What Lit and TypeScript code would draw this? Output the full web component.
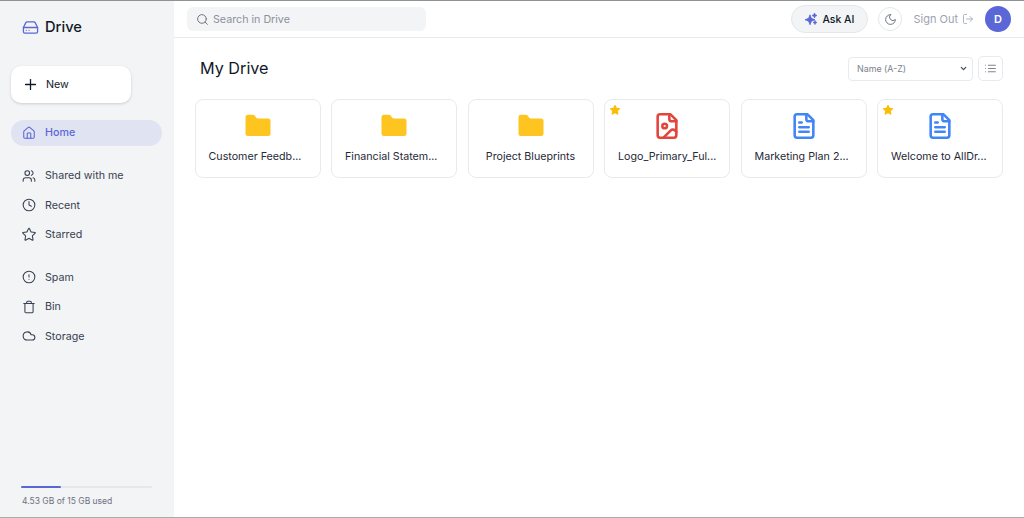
import { LitElement, html, css, svg } from 'lit';
import { customElement } from 'lit/decorators.js';
import { classMap } from 'lit/directives/class-map.js';

const stroke = (body: unknown, size = 14, sw = 2) => html`
  <svg width=${size} height=${size} viewBox="0 0 24 24" fill="none" stroke="currentColor"
    stroke-width=${sw} stroke-linecap="round" stroke-linejoin="round">${body}</svg>`;

const icons = {
  drive: svg`<path d="M22 12H2"/><path d="M5.45 5.11 2 12v6a2 2 0 0 0 2 2h16a2 2 0 0 0 2-2v-6l-3.45-6.89A2 2 0 0 0 16.76 4H7.24a2 2 0 0 0-1.79 1.11z"/><path d="M6 16h.01"/><path d="M10 16h.01"/>`,
  plus: svg`<path d="M5 12h14"/><path d="M12 5v14"/>`,
  home: svg`<path d="M15 21v-8a1 1 0 0 0-1-1h-4a1 1 0 0 0-1 1v8"/><path d="M3 10a2 2 0 0 1 .71-1.53l7-6a2 2 0 0 1 2.58 0l7 6A2 2 0 0 1 21 10v9a2 2 0 0 1-2 2H5a2 2 0 0 1-2-2z"/>`,
  users: svg`<path d="M16 21v-2a4 4 0 0 0-4-4H6a4 4 0 0 0-4 4v2"/><circle cx="9" cy="7" r="4"/><path d="M22 21v-2a4 4 0 0 0-3-3.87"/><path d="M16 3.13a4 4 0 0 1 0 7.75"/>`,
  clock: svg`<circle cx="12" cy="12" r="10"/><polyline points="12 6 12 12 16 14"/>`,
  star: svg`<path d="M11.5 2.3a.55.55 0 0 1 1 0l2.8 5.7a1 1 0 0 0 .75.55l6.3.92a.55.55 0 0 1 .3.94l-4.55 4.44a1 1 0 0 0-.29.88l1.08 6.27a.55.55 0 0 1-.8.58l-5.63-2.96a1 1 0 0 0-.93 0l-5.63 2.96a.55.55 0 0 1-.8-.58l1.07-6.27a1 1 0 0 0-.29-.88L1.35 10.4a.55.55 0 0 1 .3-.94l6.3-.92A1 1 0 0 0 8.7 8z"/>`,
  alert: svg`<circle cx="12" cy="12" r="10"/><line x1="12" y1="8" x2="12" y2="12"/><line x1="12" y1="16" x2="12.01" y2="16"/>`,
  bin: svg`<path d="M3 6h18"/><path d="M19 6v14a2 2 0 0 1-2 2H7a2 2 0 0 1-2-2V6"/><path d="M8 6V4a2 2 0 0 1 2-2h4a2 2 0 0 1 2 2v2"/>`,
  cloud: svg`<path d="M17.5 19H9a7 7 0 1 1 6.71-9h1.79a4.5 4.5 0 1 1 0 9Z"/>`,
  search: svg`<circle cx="11" cy="11" r="8"/><path d="m21 21-4.3-4.3"/>`,
  moon: svg`<path d="M12 3a6 6 0 0 0 9 9 9 9 0 1 1-9-9Z"/>`,
  signout: svg`<path d="M9 21H5a2 2 0 0 1-2-2V5a2 2 0 0 1 2-2h4"/><polyline points="16 17 21 12 16 7"/><line x1="21" y1="12" x2="9" y2="12"/>`,
  list: svg`<line x1="8" y1="6" x2="21" y2="6"/><line x1="8" y1="12" x2="21" y2="12"/><line x1="8" y1="18" x2="21" y2="18"/><line x1="3" y1="6" x2="3.01" y2="6"/><line x1="3" y1="12" x2="3.01" y2="12"/><line x1="3" y1="18" x2="3.01" y2="18"/>`,
  doc: svg`<path d="M15 2H6a2 2 0 0 0-2 2v16a2 2 0 0 0 2 2h12a2 2 0 0 0 2-2V7Z"/><path d="M14 2v4a2 2 0 0 0 2 2h4"/><path d="M10 9H8"/><path d="M16 13H8"/><path d="M16 17H8"/>`,
  image: svg`<path d="M15 2H6a2 2 0 0 0-2 2v16a2 2 0 0 0 2 2h12a2 2 0 0 0 2-2V7Z"/><path d="M14 2v4a2 2 0 0 0 2 2h4"/><circle cx="10" cy="12" r="2"/><path d="m20 17-1.3-1.3a2.4 2.4 0 0 0-3.4 0L9 22"/>`,
};

const folder = html`<svg width="30" height="30" viewBox="0 0 24 24" fill="#fec41f">
  <path d="M4 20a2 2 0 0 1-2-2V5a2 2 0 0 1 2-2h3.9a2 2 0 0 1 1.69.9l.81 1.2a2 2 0 0 0 1.67.9H20a2 2 0 0 1 2 2v10a2 2 0 0 1-2 2Z"/>
</svg>`;

const solidStar = html`<svg width="12" height="12" viewBox="0 0 24 24" fill="#fbbc04" stroke="#fbbc04" stroke-width="2" stroke-linejoin="round">
  <path d="M12 2.5l2.95 6 6.55.95-4.75 4.62 1.12 6.53L12 17.5l-5.87 3.1 1.12-6.53L2.5 9.45l6.55-.95z"/>
</svg>`;

type FileItem = { name: string; kind: 'folder' | 'doc' | 'image'; starred?: boolean };

// names are already shortened the way the app shows them
const files: FileItem[] = [
  { name: 'Customer Feedb...', kind: 'folder' },
  { name: 'Financial Statem...', kind: 'folder' },
  { name: 'Project Blueprints', kind: 'folder' },
  { name: 'Logo_Primary_Ful...', kind: 'image', starred: true },
  { name: 'Marketing Plan 2...', kind: 'doc' },
  { name: 'Welcome to AllDr...', kind: 'doc', starred: true },
];

@customElement('app-root')
export class AppRoot extends LitElement {
  static styles = css`
    :host {
      display: block;
      height: 518px;
      overflow: hidden;
      font-family: Inter, 'Noto Sans', sans-serif;
      color: #1f2937;
      background: #fff;
    }
    svg { display: block; flex: none; }

    .app {
      display: flex;
      height: 518px;
      box-sizing: border-box;
      border-top: 1px solid #8e9491;
      border-bottom: 1px solid #a9abab;
    }

    .sidebar {
      width: 174px;
      flex: none;
      box-sizing: border-box;
      background: #f3f4f6;
      padding: 0 12px 0 11px;
      display: flex;
      flex-direction: column;
    }
    .brand {
      display: flex;
      align-items: center;
      gap: 6px;
      height: 52px;
      padding: 0 0 0 11px;
      font-size: 14.7px;
      font-weight: 500;
      color: #111827;
    }
    .brand svg { color: #5b67d6; }
    .new {
      display: flex;
      align-items: center;
      gap: 7.5px;
      width: 120px;
      height: 37px;
      margin-top: 13px;
      padding-left: 10.5px;
      box-sizing: border-box;
      background: #fff;
      border-radius: 10px;
      box-shadow: 0 1px 3px rgba(0, 0, 0, .16);
      font-size: 10.7px;
      color: #111827;
    }
    nav { display: flex; flex-direction: column; }
    .item {
      display: flex;
      align-items: center;
      gap: 9.5px;
      height: 26px;
      padding-left: 10.5px;
      margin-bottom: 3.4px;
      border-radius: 13px;
      font-size: 10.7px;
      color: #374151;
    }
    .item.active {
      background: #e0e3f2;
      color: #5b67d6;
      font-weight: 500;
    }
    .main-nav { margin-top: 16.5px; }
    .group { margin-top: 13.8px; }
    .group + .group { margin-top: 13.4px; }
    .storage { margin-top: auto; padding: 0 10px 10px 10px; }
    .track { height: 2.5px; background: #e5e7eb; border-radius: 2px; }
    .fill { height: 100%; background: #5b67d6; border-radius: 2px; }
    .storage p { margin: 7px 0 0 1px; font-size: 8.5px; color: #6b7280; line-height: 12px; }

    .content { flex: 1; min-width: 0; display: flex; flex-direction: column; }
    header {
      height: 37px;
      flex: none;
      box-sizing: border-box;
      border-bottom: 1px solid #e8eaed;
      display: flex;
      align-items: center;
      padding: 0 13px;
    }
    .search {
      display: flex;
      align-items: center;
      gap: 4px;
      width: 239px;
      height: 24px;
      padding-left: 9px;
      box-sizing: border-box;
      background: #f3f4f6;
      border-radius: 6px;
      font-size: 10.7px;
      color: #8b919c;
    }
    .search svg { color: #6b7280; }
    .actions { margin-left: auto; display: flex; align-items: center; }
    .ask {
      display: flex;
      align-items: center;
      gap: 5px;
      width: 77px;
      height: 28px;
      box-sizing: border-box;
      justify-content: center;
      background: #f3f4f6;
      border: 1px solid #e5e7eb;
      border-radius: 14px;
      font-size: 10.5px;
      font-weight: 500;
      color: #111827;
    }
    .ask svg { color: #5b67d6; }
    .theme {
      display: grid;
      place-items: center;
      width: 24px;
      height: 24px;
      margin-left: 10px;
      box-sizing: border-box;
      border: 1px solid #e5e7eb;
      border-radius: 50%;
      color: #6b7280;
    }
    .signout {
      display: flex;
      align-items: center;
      gap: 4px;
      margin-left: 11px;
      font-size: 11px;
      color: #9ca3af;
    }
    .avatar {
      display: grid;
      place-items: center;
      width: 26px;
      height: 26px;
      margin-left: 11px;
      border-radius: 50%;
      background: #5b67d6;
      color: #fff;
      font-size: 11px;
      font-weight: 600;
    }

    main { padding: 0 21px 0 20.5px; }
    .toolbar {
      display: flex;
      align-items: center;
      height: 61px;
      padding-left: 5.5px;
    }
    h1 { margin: 0 0 1px; font-size: 16.2px; font-weight: 400; color: #111827; }
    .sort {
      margin-left: auto;
      display: flex;
      align-items: center;
      gap: 5px;
    }
    .select {
      display: flex;
      align-items: center;
      justify-content: space-between;
      width: 125px;
      height: 24px;
      padding: 0 4px 0 8px;
      box-sizing: border-box;
      background: #fff;
      border: 1px solid #e8eaed;
      border-radius: 4px;
      font-size: 8.9px;
      color: #7b818c;
    }
    .select svg { color: #374151; }
    .view {
      display: grid;
      place-items: center;
      width: 25px;
      height: 25px;
      box-sizing: border-box;
      border: 1px solid #e8eaed;
      border-radius: 5px;
      color: #6b7280;
    }

    .grid {
      display: grid;
      grid-template-columns: repeat(6, 1fr);
      gap: 10.5px;
    }
    .card {
      position: relative;
      height: 79px;
      box-sizing: border-box;
      border: 1px solid #e8eaed;
      border-radius: 8px;
      background: #fff;
      display: flex;
      flex-direction: column;
      align-items: center;
      padding-top: 11px;
      min-width: 0;
    }
    .card .ic { height: 30px; display: grid; place-items: center; }
    .name {
      margin-top: 9px;
      width: 100px;
      font-size: 10.7px;
      line-height: 14px;
      color: #1f2937;
      white-space: nowrap;
      text-align: center;
    }
    .name.cut { text-align: left; padding-left: 1px; box-sizing: border-box; }
    .star { position: absolute; top: 4px; left: 4px; }
    .doc { color: #4285f4; }
    .img { color: #e2453c; }
  `;

  private _item(icon: unknown, label: string, active = false) {
    return html`<div class="item ${active ? 'active' : ''}">${stroke(icon, 14, 1.8)}<span>${label}</span></div>`;
  }

  private _card(f: FileItem) {
    let icon;
    if (f.kind === 'folder') icon = folder;
    else icon = html`<span class=${f.kind === 'doc' ? 'doc' : 'img'}>${stroke(f.kind === 'doc' ? icons.doc : icons.image, 28, 2.2)}</span>`;
    return html`<div class="card">
      ${f.starred ? html`<span class="star">${solidStar}</span>` : ''}
      <div class="ic">${icon}</div>
      <div class=${classMap({ name: true, cut: f.name.endsWith('...') })}>${f.name}</div>
    </div>`;
  }

  render() {
    return html`
      <div class="app">
        <aside class="sidebar">
          <div class="brand">${stroke(icons.drive, 17, 1.8)}<span>Drive</span></div>
          <div class="new">${stroke(icons.plus, 17, 1.8)}<span>New</span></div>
          <nav class="main-nav">${this._item(icons.home, 'Home', true)}</nav>
          <nav class="group">
            ${this._item(icons.users, 'Shared with me')}
            ${this._item(icons.clock, 'Recent')}
            ${this._item(icons.star, 'Starred')}
          </nav>
          <nav class="group">
            ${this._item(icons.alert, 'Spam')}
            ${this._item(icons.bin, 'Bin')}
            ${this._item(icons.cloud, 'Storage')}
          </nav>
          <div class="storage">
            <div class="track"><div class="fill" style="width: 30.2%"></div></div>
            <p>4.53 GB of 15 GB used</p>
          </div>
        </aside>
        <div class="content">
          <header>
            <div class="search">${stroke(icons.search, 13, 1.8)}<span>Search in Drive</span></div>
            <div class="actions">
              <div class="ask">
                <svg width="12" height="12" viewBox="0 0 24 24" fill="currentColor" stroke="currentColor" stroke-width="1.5" stroke-linejoin="round">
                  <path d="M10 3.5l2.8 7.2L20 13.5l-7.2 2.8L10 23.5l-2.8-7.2L0 13.5l7.2-2.8z"/>
                  <path d="M19 0l1.5 3.5L24 5l-3.5 1.5L19 10l-1.5-3.5L14 5l3.5-1.5z"/>
                  <path d="M20 15l1.2 2.8L24 19l-2.8 1.2L20 23l-1.2-2.8L16 19l2.8-1.2z"/>
                </svg>
                <span>Ask AI</span>
              </div>
              <div class="theme">${stroke(icons.moon, 13, 1.8)}</div>
              <div class="signout"><span>Sign Out</span>${stroke(icons.signout, 12, 1.6)}</div>
              <div class="avatar">D</div>
            </div>
          </header>
          <main>
            <div class="toolbar">
              <h1>My Drive</h1>
              <div class="sort">
                <div class="select">
                  <span>Name (A-Z)</span>
                  ${stroke(svg`<path d="m6 9 6 6 6-6"/>`, 9, 3)}
                </div>
                <div class="view">${stroke(icons.list, 13, 1.6)}</div>
              </div>
            </div>
            <div class="grid">${files.map(f => this._card(f))}</div>
          </main>
        </div>
      </div>
    `;
  }
}
